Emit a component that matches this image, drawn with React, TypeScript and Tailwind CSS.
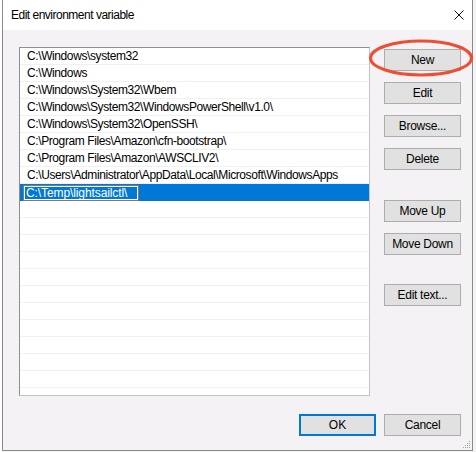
import React from 'react';

const paths = [
  'C:\\Windows\\system32',
  'C:\\Windows',
  'C:\\Windows\\System32\\Wbem',
  'C:\\Windows\\System32\\WindowsPowerShell\\v1.0\\',
  'C:\\Windows\\System32\\OpenSSH\\',
  'C:\\Program Files\\Amazon\\cfn-bootstrap\\',
  'C:\\Program Files\\Amazon\\AWSCLIV2\\',
  'C:\\Users\\Administrator\\AppData\\Local\\Microsoft\\WindowsApps',
];

const font = { fontFamily: '"Liberation Sans", Arial, sans-serif' };

function Btn({ label, className = '' }: { label: string; className?: string }) {
  return (
    <button
      className={`h-[22px] w-[77px] border border-[#adadad] bg-[#e1e1e1] text-[12px] tracking-[-0.3px] text-black leading-none ${className}`}
    >
      {label}
    </button>
  );
}

export default function App() {
  return (
    <div className="relative h-[452px] w-[476px] overflow-hidden bg-[#f3f3f3]" style={font}>
      {/* sliver of window behind */}
      <div className="absolute left-0 top-0 h-full w-[2px] bg-white" />

      <div className="absolute left-[2px] top-[-1px] flex h-[452px] w-[471px] flex-col border border-[#8a8a8a] bg-[#f5f2f5]">
        {/* title bar */}
        <div className="flex h-[30px] shrink-0 items-center justify-between bg-white pl-[8px] pr-[8px]">
          <span className="text-[12px] tracking-[-0.5px] text-black">Edit environment variable</span>
          <svg width="10" height="10" viewBox="0 0 10 10">
            <path d="M0.5 0.5 L9.5 9.5 M9.5 0.5 L0.5 9.5" stroke="#111" strokeWidth="1" />
          </svg>
        </div>

        {/* body */}
        <div className="relative flex flex-1 flex-col pl-[16px] pr-[11px] pt-[17px]">
          <div className="flex gap-[14px]">
            {/* list */}
            <div className="h-[349px] w-[351px] overflow-hidden border border-[#8f8f8f] border-b-[#c4c4c4] border-r-[#c4c4c4] bg-white">
              {paths.map((p) => (
                <div key={p} className="flex h-[17px] items-center border-b border-[#f0f0f0] pl-[7px] text-[12px] tracking-[-0.4px] text-black whitespace-nowrap">
                  {p}
                </div>
              ))}
              <div className="flex h-[17px] items-center bg-[#0078d7] pl-[3px]">
                <div className="h-[16px] w-[116px] border border-[#7a7a7a] bg-white p-[1px]">
                  <div className="flex h-full w-full items-center bg-[#0078d7] pl-[1px] text-[12px] tracking-[-0.1px] text-white whitespace-nowrap">
                    C:\Temp\lightsailctl\
                  </div>
                </div>
              </div>
              {Array.from({ length: 12 }).map((_, i) => (
                <div key={i} className="h-[17px] border-b border-[#f0f0f0]" />
              ))}
            </div>

            {/* side buttons */}
            <div className="flex flex-col">
              <div className="relative">
                <Btn label="New" />
                <svg className="absolute left-[-16px] top-[-8px]" width="106" height="40" viewBox="0 0 106 40">
                  <ellipse cx="53" cy="19" rx="50.5" ry="17" fill="none" stroke="#ec4f33" strokeWidth="3" />
                </svg>
              </div>
              <Btn label="Edit" className="mt-[11px]" />
              <Btn label="Browse..." className="mt-[11px]" />
              <Btn label="Delete" className="mt-[11px]" />
              <Btn label="Move Up" className="mt-[30px]" />
              <Btn label="Move Down" className="mt-[11px]" />
              <Btn label="Edit text..." className="mt-[29px]" />
            </div>
          </div>

          {/* bottom buttons */}
          <div className="mt-[18px] flex justify-end gap-[8px]">
            <button className="h-[22px] w-[77px] border-2 border-[#0078d7] bg-[#e1e1e1] text-[12px] text-black">OK</button>
            <Btn label="Cancel" />
          </div>

          {/* size grip */}
          <svg className="absolute bottom-[1px] right-[1px]" width="10" height="10" viewBox="0 0 10 10">
            <rect x="8" y="2" width="1" height="1" fill="#a0a0a0" />
            <rect x="6" y="4" width="1" height="1" fill="#a0a0a0" />
            <rect x="8" y="4" width="1" height="1" fill="#a0a0a0" />
            <rect x="4" y="6" width="1" height="1" fill="#a0a0a0" />
            <rect x="6" y="6" width="1" height="1" fill="#a0a0a0" />
            <rect x="8" y="6" width="1" height="1" fill="#a0a0a0" />
            <rect x="2" y="8" width="1" height="1" fill="#a0a0a0" />
            <rect x="4" y="8" width="1" height="1" fill="#a0a0a0" />
            <rect x="6" y="8" width="1" height="1" fill="#a0a0a0" />
            <rect x="8" y="8" width="1" height="1" fill="#a0a0a0" />
          </svg>
        </div>
      </div>
    </div>
  );
}
